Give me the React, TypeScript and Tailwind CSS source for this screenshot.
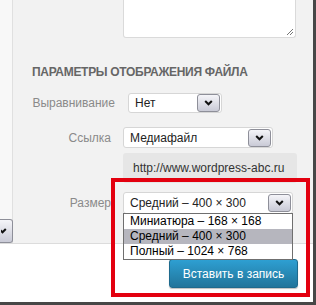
import React from 'react';

const Chevron = () => (
  <svg width="9" height="6" viewBox="0 0 9 6" className="block">
    <polyline points="1.2,1 4.5,4.3 7.8,1" fill="none" stroke="#111" strokeWidth="2" />
  </svg>
);

function ArrowBox({ className = '' }: { className?: string }) {
  return (
    <div
      className={`flex items-center justify-center rounded-[3px] border border-[#8e8f99] bg-gradient-to-b from-[#f5f5f9] to-[#c9cad6] ${className}`}
    >
      <Chevron />
    </div>
  );
}

function Select({
  value,
  width,
  height,
  children,
}: {
  value: string;
  width: string;
  height: string;
  children?: React.ReactNode;
}) {
  return (
    <div
      className={`relative flex items-center rounded-[3px] border border-[#d6d6d6] bg-white pl-[6px] text-[12px] text-[#222] ${width} ${height}`}
    >
      <span className="flex-1 leading-none">{value}</span>
      <ArrowBox className="mr-[1px] h-[18px] w-[23px]" />
      {children}
    </div>
  );
}

const sizes = [
  { label: 'Миниатюра – 168 × 168', active: false },
  { label: 'Средний – 400 × 300', active: true },
  { label: 'Полный – 1024 × 768', active: false },
];

export default function App() {
  return (
    <div className="relative flex h-[305px] w-[316px] flex-col overflow-hidden border-b-[3px] border-r-[3px] border-[#474747] bg-white font-['Liberation_Sans',Arial,sans-serif]">
      <div className="flex h-[244px] shrink-0 border-b border-[#dcdcdc]">
        {/* left neighbour column */}
        <div className="flex w-[13px] shrink-0 flex-col justify-end border-r border-[#e0e0e0] bg-[#f8f8f8]">
          <div className="flex h-[24px] w-[13px] items-center justify-start rounded-r-[3px] border-y border-r border-[#8e8f99] bg-gradient-to-b from-[#f5f5f9] to-[#c9cad6] pl-[1px]">
            <svg width="6" height="6" viewBox="0 0 6 6">
              <polyline points="-2,1 1.5,4.3 4.8,1" fill="none" stroke="#111" strokeWidth="2" />
            </svg>
          </div>
        </div>

        {/* attachment settings panel */}
        <div className="flex flex-1 flex-col bg-[#f2f2f2]">
          <div className="relative ml-[110px] h-[38px] w-[173px] rounded-b-[3px] border-x border-b border-[#dadada] bg-white">
            <svg width="8" height="8" viewBox="0 0 8 8" className="absolute bottom-[1px] right-[1px]">
              <line x1="1" y1="7" x2="7" y2="1" stroke="#777" strokeWidth="1" />
              <line x1="4" y1="7" x2="7" y2="4" stroke="#777" strokeWidth="1" />
            </svg>
          </div>

          <h3 className="mt-[27px] pl-[19px] text-[12px] font-bold uppercase leading-[14px] tracking-[-0.3px] text-[#666]">
            Параметры отображения файла
          </h3>

          <div className="mt-[14px] flex h-[20px] items-center text-[12px] text-[#8a8a8a]">
            <span className="w-[102px] text-right">Выравнивание</span>
            <div className="ml-[13px]">
              <Select value="Нет" width="w-[94px]" height="h-[20px]" />
            </div>
          </div>

          <div className="mt-[14px] flex h-[21px] items-center text-[12px] text-[#8a8a8a]">
            <span className="w-[98px] text-right">Ссылка</span>
            <div className="ml-[12px]">
              <Select value="Медиафайл" width="w-[150px]" height="h-[21px]" />
            </div>
          </div>

          <div className="ml-[110px] mt-[5px] flex h-[30px] w-[174px] items-center rounded-[3px] bg-[#e6e6e6] pl-[10px] text-[12px] text-[#333]">
            http://www.wordpress-abc.ru
          </div>

          <div className="mt-[9px] flex h-[22px] items-center text-[12px] text-[#8a8a8a]">
            <span className="w-[98px] text-right">Размер</span>
            <div className="ml-[12px]">
              <Select value="Средний – 400 × 300" width="w-[170px]" height="h-[22px]">
                <ul className="absolute left-[-1px] top-full z-10 w-[170px] border border-[#6f6f6f] bg-white text-[12px] text-black">
                  {sizes.map((s) => (
                    <li
                      key={s.label}
                      className={`h-[15px] pl-[6px] leading-[15px] ${s.active ? 'bg-[#b6b6be]' : ''}`}
                    >
                      {s.label}
                    </li>
                  ))}
                </ul>
              </Select>
            </div>
          </div>
        </div>
      </div>

      <div className="flex flex-1 justify-end pr-[15px] pt-[15px]">
        <button
          type="button"
          className="h-[29px] w-[129px] rounded-[3px] border border-[#1e6a8d] bg-gradient-to-b from-[#2e9fd2] to-[#21759b] text-[12px] text-white shadow-[0_1px_1px_rgba(0,0,0,0.25)]"
        >
          Вставить в запись
        </button>
      </div>

      {/* highlight frame */}
      <div className="pointer-events-none absolute left-[111px] top-[178px] z-20 h-[119px] w-[199px] border-[4px] border-[#e3000f]" />
    </div>
  );
}
